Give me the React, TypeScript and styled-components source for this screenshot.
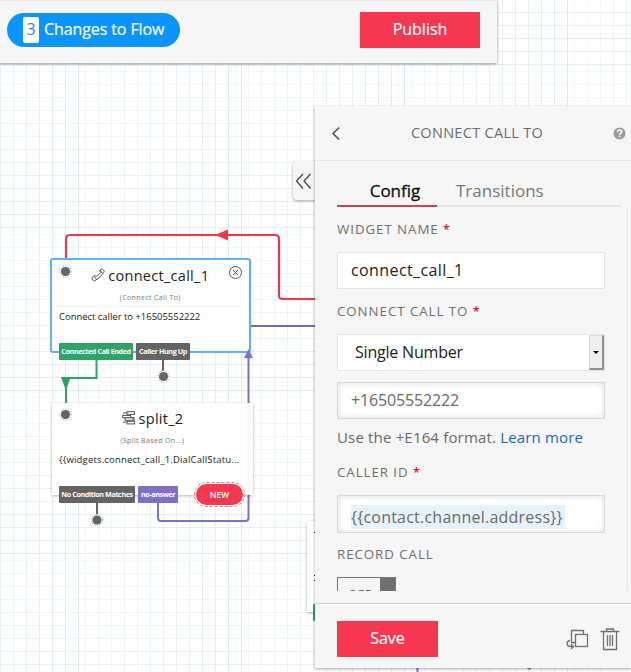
import React from "react";
import styled, { createGlobalStyle, css } from "styled-components";

const colors = {
  red: "#f5374f",
  blue: "#0a94fd",
  purple: "#7f6fc8",
  green: "#2fa268",
  grey: "#646464",
  panel: "#f6f6f6",
};

const GlobalStyle = createGlobalStyle`
  * { box-sizing: border-box; }
  body { margin: 0; font-family: "Open Sans", "Noto Sans", sans-serif; font-size: 16px; color: #222; }
  button, input { font: inherit; }
`;

const Page = styled.main`
  position: relative;
  width: 631px;
  height: 672px;
  overflow: hidden;
  background: #fff;
`;

const Wires = styled.svg`
  position: absolute;
  inset: 0;
  display: block;
`;

/* ---------- top bar ---------- */

const TopBar = styled.header`
  position: relative;
  display: flex;
  align-items: flex-start;
  justify-content: space-between;
  width: 497px;
  height: 63px;
  padding: 12px 17px 0 7px;
  background: ${colors.panel};
  border-top: 1px solid #e9e9e9;
  box-shadow: 0 1px 3px rgba(0, 0, 0, 0.42);
`;

const ChangesPill = styled.button`
  display: flex;
  align-items: center;
  width: 173px;
  height: 34px;
  padding: 0 0 1px 16px;
  border: 0;
  border-radius: 17px;
  background: ${colors.blue};
  color: #fff;
  font-size: 16px;
  letter-spacing: -0.1px;
  white-space: nowrap;
  -webkit-text-stroke: 0.2px #fff;
`;

const Count = styled.span`
  width: 16px;
  height: 26px;
  margin-right: 5px;
  border-radius: 2px;
  background: #fff;
  color: #3a7fd0;
  line-height: 25px;
  text-align: center;
  -webkit-text-stroke: 0;
`;

const PillText = styled.span`
  padding-bottom: 2px;
`;

const RedButton = styled.button<{ $width: number }>`
  width: ${(p) => p.$width}px;
  height: 36px;
  padding: 0 0 2px;
  margin-top: -1px;
  border: 0;
  background: ${colors.red};
  color: #fff;
  font-size: 16px;
  -webkit-text-stroke: 0.2px #fff;
`;

/* ---------- flow nodes ---------- */

const NodeBox = styled.section<{ $x: number; $y: number; $w: number; $h: number; $active?: boolean }>`
  position: absolute;
  left: ${(p) => p.$x}px;
  top: ${(p) => p.$y}px;
  width: ${(p) => p.$w}px;
  height: ${(p) => p.$h}px;
  display: flex;
  flex-direction: column;
  padding: 0 7px;
  background: rgba(255, 255, 255, 0.94);
  ${(p) =>
    p.$active
      ? css`
          border: 2px solid #5db3f5;
          border-radius: 3px;
        `
      : css`
          box-shadow: 0 1px 3px rgba(0, 0, 0, 0.3);
        `}
`;

const NodeTitle = styled.h3`
  display: flex;
  align-items: center;
  justify-content: center;
  gap: 3px;
  height: 22px;
  margin: 4px 0 0;
  font-size: 14.5px;
  font-weight: 400;
  letter-spacing: 0.28px;
  color: #222;
`;

const NodeKind = styled.div`
  height: 12px;
  margin-top: 6px;
  font-size: 7px;
  line-height: 12px;
  letter-spacing: 0.36px;
  text-align: center;
  color: #777;
`;

const NodeText = styled.p<{ $rule?: boolean; $spacing: number }>`
  margin: 2px 0 0;
  padding-top: 2px;
  border-top: 1px solid ${(p) => (p.$rule ? "#eee" : "transparent")};
  font-size: 9.5px;
  line-height: 16px;
  letter-spacing: ${(p) => p.$spacing}px;
  white-space: nowrap;
`;

const Tags = styled.div<{ $x: number; $y: number; $gap: number }>`
  position: absolute;
  left: ${(p) => p.$x}px;
  top: ${(p) => p.$y}px;
  display: flex;
  gap: ${(p) => p.$gap}px;
`;

const Tag = styled.span<{ $bg: string; $width: number }>`
  width: ${(p) => p.$width}px;
  height: 17px;
  border-radius: 1px;
  background: ${(p) => p.$bg};
  color: #fff;
  font-size: 7.2px;
  font-weight: 700;
  line-height: 16px;
  letter-spacing: -0.4px;
  text-align: center;
  white-space: nowrap;
`;

const NewPill = styled.button`
  position: absolute;
  left: 196px;
  top: 484px;
  width: 47px;
  height: 21px;
  padding: 0 0 1px;
  border: 0;
  border-radius: 11px;
  outline: 1px dashed #f27d8a;
  outline-offset: 1px;
  background: ${colors.red};
  color: #fff;
  font-size: 8.5px;
  font-weight: 600;
`;

const Overlay = styled.svg<{ $x: number; $y: number }>`
  position: absolute;
  left: ${(p) => p.$x}px;
  top: ${(p) => p.$y}px;
`;

/* ---------- side panel ---------- */

const Collapse = styled.button`
  position: absolute;
  left: 293px;
  top: 161px;
  width: 40px;
  height: 39px;
  padding: 0;
  border: 0;
  border-radius: 4px;
  background: ${colors.panel};
  box-shadow: 0 1px 3px rgba(0, 0, 0, 0.35);
`;

const Panel = styled.aside`
  position: absolute;
  left: 315px;
  top: 106px;
  width: 330px;
  height: 562px;
  display: flex;
  flex-direction: column;
  background: ${colors.panel};
  box-shadow: 0 1px 3px rgba(0, 0, 0, 0.35);
`;

const PanelHead = styled.div`
  display: flex;
  align-items: center;
  height: 55px;
  padding: 0 19px 0 16px;
  border-bottom: 1px solid #e8e8e8;
`;

const PanelTitle = styled.h2`
  flex: 1;
  margin: 0 0 1px;
  font-size: 14.5px;
  font-weight: 400;
  letter-spacing: 0.3px;
  text-align: center;
  color: #6d6d6d;
`;

const TabList = styled.div`
  display: flex;
  flex: none;
  width: 284px;
  height: 46px;
  margin-left: 22px;
  border-bottom: 2px solid #e6e6e6;
`;

const Tab = styled.button<{ $active?: boolean }>`
  height: 46px;
  padding: 15px 19px 0;
  border: 0;
  border-bottom: 2px solid transparent;
  background: none;
  color: #777;
  font-size: 17px;
  line-height: 24px;
  text-align: center;
  ${(p) =>
    p.$active &&
    css`
      width: 100px;
      padding: 15px 0 0 16px;
      border-bottom-color: #ce4257;
      color: #111;
      -webkit-text-stroke: 0.3px #111;
    `}
`;

const Body = styled.div`
  height: 384px;
  width: 313px;
  padding: 12px 23px 0 22px;
  overflow: hidden;
  border-right: 1px solid #e6e6e6;
`;

const Label = styled.label<{ $top?: number; $gap?: number }>`
  display: block;
  height: 20px;
  margin: ${(p) => p.$top ?? 0}px 0 ${(p) => p.$gap ?? 13}px;
  font-size: 13.3px;
  line-height: 20px;
  letter-spacing: 0.95px;
  color: #707070;
  white-space: nowrap;
`;

const Star = styled.span`
  font-size: 12.5px;
  font-weight: 600;
  color: #d5202f;
`;

const Field = styled.div<{ $inset?: boolean; $h?: number; $top?: number; $drop?: number }>`
  display: flex;
  align-items: center;
  width: 268px;
  height: ${(p) => p.$h ?? 37}px;
  margin-top: ${(p) => p.$top ?? 0}px;
  padding: ${(p) => p.$drop ?? 0}px 0 0 13px;
  border: 1px solid ${(p) => (p.$inset ? "#d9d9d9" : "#e5e5e5")};
  background: #fff;
  color: ${(p) => (p.$inset ? "#6a6a6a" : "#222")};
  box-shadow: ${(p) => (p.$inset ? "inset 0 0 6px rgba(0,0,0,.14)" : "none")};
  white-space: nowrap;
`;

const Value = styled.span<{ $spacing?: number }>`
  padding-bottom: 2px;
  letter-spacing: ${(p) => p.$spacing ?? 0}px;
`;

const Token = styled(Value)`
  padding: 0 2px 0 0;
  background: #e6f3fd;
  line-height: 24px;
`;

const SelectField = styled(Field)`
  justify-content: space-between;
  padding-left: 17px;
`;

const Arrow = styled.span`
  display: flex;
  align-items: center;
  justify-content: center;
  width: 15px;
  height: 35px;
  border: 1px solid #ddd;
  border-right: 2px solid #919191;
  border-bottom: 2px solid #919191;
  background: #eee;
  &::after {
    content: "";
    border: 3.5px solid transparent;
    border-top-color: #000;
    border-bottom: 0;
  }
`;

const Help = styled.p`
  height: 22px;
  margin: 7px 0 0;
  font-size: 15px;
  line-height: 22px;
  letter-spacing: 0.17px;
  color: #6a6a6a;
  white-space: nowrap;
`;

const Link = styled.a`
  color: #1769bb;
`;

const Toggle = styled.div`
  display: flex;
  justify-content: space-between;
  width: 59px;
  height: 27px;
  padding-left: 10px;
  border: 1px solid #757575;
  font-size: 12px;
  line-height: 33px;
  letter-spacing: 0.5px;
  color: #666;
  &::after {
    content: "";
    width: 15px;
    background: #707070;
  }
`;

const Footer = styled.div`
  display: flex;
  align-items: center;
  height: 65px;
  margin-top: 12px;
  padding: 6px 0 0 22px;
  border-top: 1px solid #cfcfcf;
`;

const FooterIcon = styled.svg<{ $gap: number }>`
  margin-left: ${(p) => p.$gap}px;
  fill: none;
  stroke: #717171;
  stroke-width: 1.3;
`;

const steps = Array.from({ length: 13 }, (_, i) => i);

const Grid = () => (
  <>
    <defs>
      <pattern id="grid" x="72" y="71" width="163" height="163" patternUnits="userSpaceOnUse">
        {steps.map((i) => (
          <g key={i} fill="#c8e1f1" opacity={0.2 + i * 0.03}>
            <rect x={i * 13} y="0" width="1" height="163" />
            <rect x="0" y={i * 13} width="163" height="1" />
          </g>
        ))}
        <rect x="6" y="0" width="1" height="163" fill="#c6e0f0" opacity="0.6" />
      </pattern>
    </defs>
    <rect width="631" height="672" fill="url(#grid)" />
  </>
);

const Port = ({ cx, cy }: { cx: number; cy: number }) => (
  <g>
    <circle cx={cx} cy={cy} r="5.7" fill="#fff" stroke="#777" strokeWidth="0.7" strokeDasharray="1 1.6" />
    <circle cx={cx} cy={cy} r="4.6" fill="#646464" />
  </g>
);

const PhoneIcon = () => (
  <svg width="14" height="14" viewBox="0 0 14 14" fill="none" stroke="#444" strokeWidth="0.9" strokeLinejoin="round">
    <path d="M10.300 1.100 9.300 1.800Q8.500 2.500 9 3.400L9.600 4.300Q8.300 6.800 5.200 8.500L4.500 7.900Q3.800 7.300 3 7.900L1.300 9.200Q.5 9.900 1.100 10.700L2.200 12.500Q2.800 13.300 3.700 12.800 9.500 9.800 12.900 4.200 13.500 3.300 12.800 2.500L11.600 1.300Q11 .7 10.300 1.100ZM9.200 2.300 11.500 5.200M3.200 8.400 5.500 11.300" />
  </svg>
);

const SplitIcon = () => (
  <svg width="14" height="14" viewBox="0 0 14 14" fill="#fff" stroke="#444" strokeWidth="0.9">
    <path fill="none" d="M5 2H1M1 11.100H5M9.200 6.500H12V9.800" />
    <rect x="5" y=".7" width="7.500" height="2.600" />
    <rect x=".7" y="4.400" width="8" height="2.400" />
    <rect x="3" y="6.800" width="8" height="2.400" />
    <rect x="5" y="10.300" width="7.500" height="2.600" />
  </svg>
);

export default function App() {
  return (
    <Page>
      <GlobalStyle />
      <Wires width="631" height="672" fill="none" strokeWidth="2">
        <Grid />
        <path d="M66 260V239q0-4 4-4H275q4 0 4 4V296q0 3 4 3H316" stroke="#e63950" strokeWidth="2.200" />
        <path d="M215 235 228 229.500V240.500Z" fill="#f2374f" />
        <path d="M250 326H316" stroke="#7468b8" />
        <path d="M96.500 360V378H66" stroke={colors.green} />
        <path d="M66 378V404" stroke={colors.green} />
        <path d="M61 377H70.500L66 391Z" fill={colors.green} />
        <path d="M163 360V373M97 503V516" stroke="#666" />
        <path d="M248.500 357V404M158 503V518q0 3 3 3H245.500q3 0 3-3V404" stroke={colors.purple} />
        <path d="M417.500 660V672" stroke={colors.purple} />
        <path d="M525 667H531V669.500H529Z" fill={colors.purple} />
      </Wires>

      <NodeBox $x={50} $y={258} $w={200.5} $h={95} $active>
        <NodeTitle>
          <PhoneIcon />
          connect_call_1
        </NodeTitle>
        <NodeKind>(Connect Call To)</NodeKind>
        <NodeText $rule $spacing={-0.03}>Connect caller to +16505552222</NodeText>
      </NodeBox>
      <NodeBox $x={52} $y={403} $w={201} $h={92}>
        <NodeTitle>
          <SplitIcon />
          split_2
        </NodeTitle>
        <NodeKind>(Split Based On...)</NodeKind>
        <NodeText $spacing={0.17}>{"{{widgets.connect_call_1.DialCallStatu..."}</NodeText>
      </NodeBox>
      <NodeBox $x={307} $y={521} $w={200} $h={91} />
      <Tags $x={313} $y={604} $gap={0}>
        <Tag $bg={colors.green} $width={60} />
      </Tags>

      <Tags $x={59} $y={343} $gap={3}>
        <Tag $bg={colors.green} $width={74}>Connected Call Ended</Tag>
        <Tag $bg={colors.grey} $width={54}>Caller Hung Up</Tag>
      </Tags>
      <Tags $x={59} $y={486} $gap={3}>
        <Tag $bg={colors.grey} $width={76}>No Condition Matches</Tag>
        <Tag $bg={colors.purple} $width={40}>no-answer</Tag>
      </Tags>
      <NewPill>NEW</NewPill>

      <Overlay $x={0} $y={0} width="315" height="600" pointerEvents="none">
        <path d="M244 358 248.500 349 253 358Z" fill={colors.purple} />
        <Port cx={65.5} cy={271.5} />
        <Port cx={65.5} cy={414.5} />
        <Port cx={163.5} cy={376.5} />
        <Port cx={97} cy={520} />
        <g fill="none" stroke="#555" strokeWidth="1">
          <circle cx="235.500" cy="272.500" r="6" />
          <path d="m233 270 5 5m0-5-5 5" />
        </g>
        <path d="M314 532.500h1M314 575.500h1M314 580.500h1" stroke="#222" />
      </Overlay>

      <TopBar>
        <ChangesPill>
          <Count>3</Count>
          <PillText>Changes to Flow</PillText>
        </ChangesPill>
        <RedButton $width={120}>Publish</RedButton>
      </TopBar>

      <Collapse aria-label="Collapse panel" />
      <Panel>
        <PanelHead>
          <svg width="10" height="14" viewBox="0 0 10 14" fill="none" stroke="#555" strokeWidth="1.700">
            <path d="M8.200 1.500 2 7.500l6.200 6" />
          </svg>
          <PanelTitle>CONNECT CALL TO</PanelTitle>
          <svg width="13" height="13" viewBox="0 0 13 13">
            <circle cx="6.500" cy="6.500" r="6" fill="#9c9c9c" />
            <path d="M4.500 5q.2-1.900 2.100-1.900Q8.600 3.200 8.600 4.900q0 .9-1.100 1.500-.9.500-.9 1.300M6.600 8.700v1.500" fill="none" stroke="#fff" strokeWidth="1.500" />
          </svg>
        </PanelHead>
        <TabList>
          <Tab $active>Config</Tab>
          <Tab>Transitions</Tab>
        </TabList>
        <Body>
          <Label>WIDGET NAME <Star>*</Star></Label>
          <Field><Value $spacing={0.4}>connect_call_1</Value></Field>
          <Label $top={12}>CONNECT CALL TO <Star>*</Star></Label>
          <SelectField><Value $spacing={-0.2}>Single Number</Value><Arrow /></SelectField>
          <Field $inset $top={11}><Value $spacing={-0.15}>+16505552222</Value></Field>
          <Help>Use the +E164 format. <Link>Learn more</Link></Help>
          <Label $top={14}>CALLER ID <Star>*</Star></Label>
          <Field $inset $h={38} $drop={5}><Token $spacing={0.22}>{"{{contact.channel.address}}"}</Token></Field>
          <Label $top={11}>RECORD CALL</Label>
          <Toggle>OFF</Toggle>
        </Body>
        <Footer>
          <RedButton $width={101}>Save</RedButton>
          <FooterIcon $gap={128} width="23" height="22" viewBox="0 0 23 22">
            <path d="M9.500 14.500H5.500V2.500H17.500V6.500" />
            <rect x="9.500" y="6.500" width="12" height="12" fill="#f6f6f6" />
            <path d="M4 12.500Q1 13 1 15.500T4 18.500H7M5 16l2.500 2.500L5 21" />
          </FooterIcon>
          <FooterIcon $gap={11} width="20" height="23" viewBox="0 0 20 23">
            <path d="M.5 3.500H19.500M6.500 3.500V1H13.500V3.500M3.500 3.500V21.500H16.500V3.500M7.500 7V18M10 7V18M12.500 7V18" />
          </FooterIcon>
        </Footer>
      </Panel>
      <Overlay $x={295} $y={172} width="18" height="18" fill="none" stroke="#444" strokeWidth="1.300">
        <path d="M8 2 1.500 9 8 16.500M15.500 2 9 9l6.500 7.500" />
      </Overlay>
    </Page>
  );
}
